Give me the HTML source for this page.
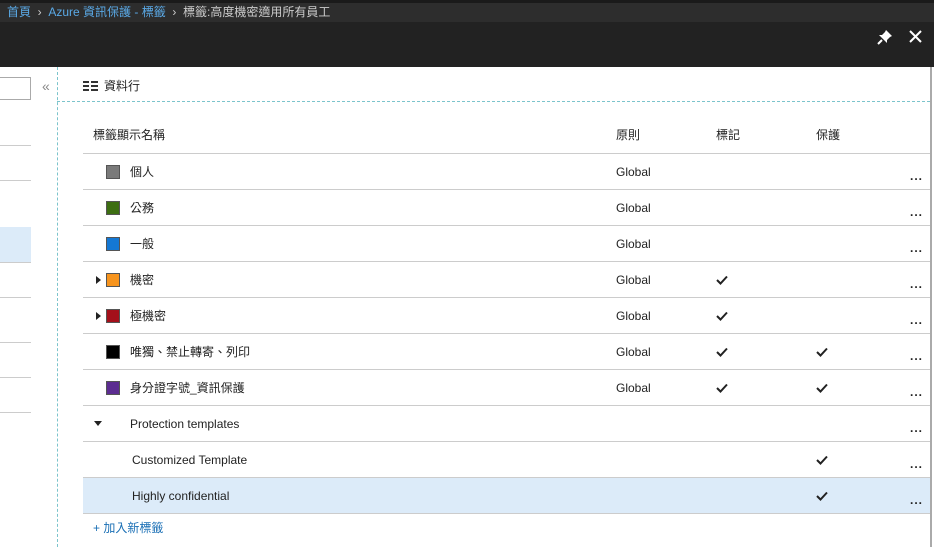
<!DOCTYPE html>
<html><head><meta charset="utf-8"><style>
*{margin:0;padding:0;box-sizing:border-box}
body{width:934px;height:547px;overflow:hidden;background:#fff;font-family:"Liberation Sans","Noto Sans CJK TC",sans-serif;font-size:12px;color:#222;position:relative}
.a{position:absolute}
.bc{top:0;left:0;width:934px;height:22px;background:#2d2d2d;border-top:3px solid #1a1a1a;color:#ccc;font-size:12px;line-height:18px;padding-left:7px}
.bc .l{color:#5aa9e6}
.bar{top:22px;left:0;width:934px;height:45px;background:#222}
.row{left:83px;width:847px;height:36px;border-bottom:1px solid #ccc;line-height:36px;font-size:12px}
.sq{position:absolute;left:23px;top:11px;width:14px;height:14px;border:1px solid #555}
.nm{position:absolute;left:47px}
.g{position:absolute;left:533px}
.c1{position:absolute;left:633px;top:13px}
.c2{position:absolute;left:733px;top:13px}
.dt{position:absolute;left:827px;top:4px;font-weight:bold;letter-spacing:1px}
.tri{position:absolute;left:13px;top:14px;width:0;height:0;border-top:4px solid transparent;border-bottom:4px solid transparent;border-left:5px solid #222}
.ll{left:0;width:31px;height:1px;background:#ccc}
</style></head><body>
<div class="a bc"><span class="l">首頁</span> &nbsp;›&nbsp; <span class="l">Azure 資訊保護 - 標籤</span> &nbsp;›&nbsp; 標籤:高度機密適用所有員工</div>
<div class="a bar"></div>
<svg class="a" style="top:29px;left:877px" width="16" height="16" viewBox="0 0 16 16"><path d="M9 1 L15 7 L13 8 L10 11 L10 14 L2 6 L5 6 L8 3 Z" fill="#fff"/><path d="M5 11 L1 15" stroke="#fff" stroke-width="2"/></svg>
<svg class="a" style="top:30px;left:909px" width="13" height="13" viewBox="0 0 13 13"><path d="M1 1 L12 12 M12 1 L1 12" stroke="#fff" stroke-width="2"/></svg>
<div class="a" style="top:77px;left:0;width:31px;height:23px;border:1px solid #aaa;border-left:none"></div>
<div class="a" style="top:78px;left:42px;color:#888;font-size:14px">«</div>
<div class="a ll" style="top:145px"></div>
<div class="a ll" style="top:180px"></div>
<div class="a" style="top:227px;left:0;width:31px;height:35px;background:#dcebf9"></div>
<div class="a ll" style="top:262px"></div>
<div class="a ll" style="top:297px"></div>
<div class="a ll" style="top:342px"></div>
<div class="a ll" style="top:377px"></div>
<div class="a ll" style="top:412px"></div>
<div class="a" style="top:67px;left:57px;width:1px;height:480px;border-left:1px dashed #7cc4cc"></div>
<div class="a" style="top:101px;left:57px;width:873px;height:1px;border-top:1px dashed #7cc4cc"></div>
<div class="a" style="top:67px;left:930px;width:2px;height:480px;background:#aaa"></div>
<svg class="a" style="top:81px;left:83px" width="15" height="10" viewBox="0 0 15 10"><path d="M0 0h6v2H0zM8 0h7v2H8zM0 4h6v2H0zM8 4h7v2H8zM0 8h6v2H0zM8 8h7v2H8z" fill="#333"/></svg>
<div class="a" style="top:77px;left:104px;font-size:12px">資料行</div>
<div class="a row" style="top:117px;height:37px"><span class="nm" style="left:10px">標籤顯示名稱</span><span class="g">原則</span><span class="g" style="left:633px">標記</span><span class="g" style="left:733px">保護</span></div>
<svg width="0" height="0" style="position:absolute"><defs><symbol id="ck" viewBox="0 0 12 10"><path d="M1 5 L4.5 8.5 L11 1.5" fill="none" stroke="#222" stroke-width="2"/></symbol></defs></svg>
<div class="a row" style="top:154px"><div class="sq" style="background:#7a7a7a"></div><span class="nm">個人</span><span class="g">Global</span><span class="dt">...</span></div>
<div class="a row" style="top:190px"><div class="sq" style="background:#3d6e12"></div><span class="nm">公務</span><span class="g">Global</span><span class="dt">...</span></div>
<div class="a row" style="top:226px"><div class="sq" style="background:#1478d4"></div><span class="nm">一般</span><span class="g">Global</span><span class="dt">...</span></div>
<div class="a row" style="top:262px"><div class="tri"></div><div class="sq" style="background:#f7941d"></div><span class="nm">機密</span><span class="g">Global</span><svg class="c1" width="12" height="10"><use href="#ck"/></svg><span class="dt">...</span></div>
<div class="a row" style="top:298px"><div class="tri"></div><div class="sq" style="background:#a4101a"></div><span class="nm">極機密</span><span class="g">Global</span><svg class="c1" width="12" height="10"><use href="#ck"/></svg><span class="dt">...</span></div>
<div class="a row" style="top:334px"><div class="sq" style="background:#000"></div><span class="nm">唯獨、禁止轉寄、列印</span><span class="g">Global</span><svg class="c1" width="12" height="10"><use href="#ck"/></svg><svg class="c2" width="12" height="10"><use href="#ck"/></svg><span class="dt">...</span></div>
<div class="a row" style="top:370px"><div class="sq" style="background:#5c2d91"></div><span class="nm">身分證字號_資訊保護</span><span class="g">Global</span><svg class="c1" width="12" height="10"><use href="#ck"/></svg><svg class="c2" width="12" height="10"><use href="#ck"/></svg><span class="dt">...</span></div>
<div class="a row" style="top:406px"><div style="position:absolute;left:11px;top:15px;border-left:4px solid transparent;border-right:4px solid transparent;border-top:5px solid #222"></div><span class="nm">Protection templates</span><span class="dt">...</span></div>
<div class="a row" style="top:442px"><span class="nm" style="left:49px">Customized Template</span><svg class="c2" width="12" height="10"><use href="#ck"/></svg><span class="dt">...</span></div>
<div class="a row" style="top:478px;background:#dcebf9"><span class="nm" style="left:49px">Highly confidential</span><svg class="c2" width="12" height="10"><use href="#ck"/></svg><span class="dt">...</span></div>
<div class="a" style="top:519px;left:93px;color:#1a6fb5">+ 加入新標籤</div>
</body></html>
